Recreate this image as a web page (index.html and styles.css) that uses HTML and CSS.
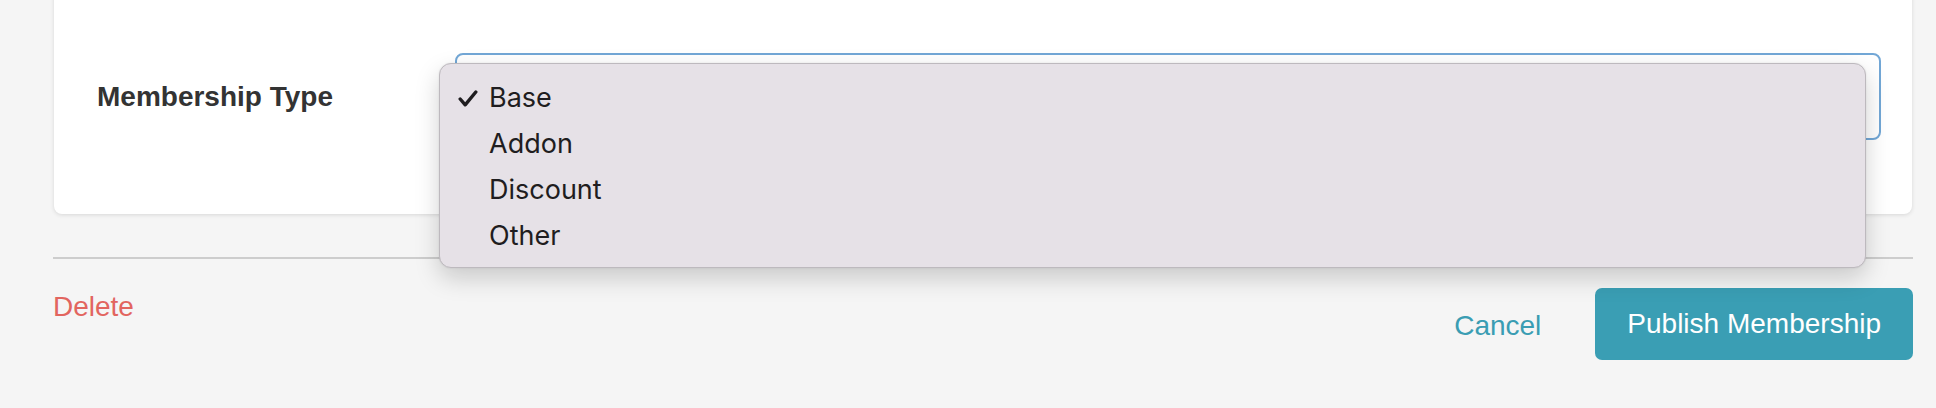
FILE: index.html
```html
<!DOCTYPE html>
<html lang="en">
<head>
    <meta charset="UTF-8">
    <title>Edit Membership</title>
    <link rel="stylesheet" href="styles.css">
</head>
<body>
    <div class="page">
        <!-- Form card -->
        <div class="card">
            <div class="form-row">
                <label class="field-label">Membership Type</label>
                <div class="select-wrap">
                    <div class="select-box"></div>

                    <!-- Open native menu -->
                    <ul class="menu">
                        <li class="menu-item selected">
                            <svg class="check" width="20" height="17" viewBox="0 0 20 17">
                                <path d="M2.2 9 L7.2 14.8 L17.8 2" fill="none" stroke="#1f1d20" stroke-width="3.4" stroke-linecap="round" stroke-linejoin="round"/>
                            </svg>
                            Base
                        </li>
                        <li class="menu-item">Addon</li>
                        <li class="menu-item">Discount</li>
                        <li class="menu-item">Other</li>
                    </ul>
                </div>
            </div>
        </div>

        <hr class="divider">

        <!-- Bottom actions -->
        <div class="actions">
            <a class="delete-link" href="#">Delete</a>
            <div class="right-actions">
                <a class="cancel-link" href="#">Cancel</a>
                <button class="publish-btn">Publish Membership</button>
            </div>
        </div>
    </div>
</body>
</html>
```
FILE: styles.css
```css
body {
    margin: 0;
    background-color: #f5f5f5;
    font-family: "Liberation Sans", Arial, sans-serif;
    color: #333;
    overflow: hidden;
}
.page {
    margin: 0 23px 0 53px;
}
/* Card */
.card {
    background-color: #fff;
    margin: -20px 1px 0 1px;
    padding: 73px 31px 74px 43px;
    border-radius: 8px;
    box-shadow: 0 1px 4px rgba(0, 0, 0, 0.12);
}
.form-row {
    display: grid;
    grid-template-columns: 358px 1fr;
    align-items: center;
}
.field-label {
    font-size: 28px;
    font-weight: bold;
    color: #333;
}
.select-wrap {
    position: relative;
}
.select-box {
    height: 87px;
    border: 2px solid #72a7d6;
    border-radius: 8px;
    box-sizing: border-box;
}
/* Dropdown menu */
.menu {
    position: absolute;
    top: 10px;
    left: -16px;
    width: 1427px;
    margin: 0;
    padding: 11px 0 8px 0;
    list-style: none;
    box-sizing: border-box;
    background-color: #e6e1e7;
    border: 1px solid #bdb9be;
    border-radius: 12px;
    box-shadow: 0 10px 24px rgba(0, 0, 0, 0.18), 0 0 2px rgba(0, 0, 0, 0.1);
    font-family: Inter, "Noto Sans", sans-serif;
    font-size: 27px;
    color: #1f1d20;
}
.menu-item {
    position: relative;
    height: 46px;
    line-height: 46px;
    padding-left: 49px;
}
.check {
    position: absolute;
    left: 18px;
    top: 15px;
}
/* Divider */
.divider {
    border: none;
    height: 2px;
    background-color: #cdcdcd;
    margin: 43px 0 0 0;
}
/* Bottom actions */
.actions {
    display: flex;
    justify-content: space-between;
    align-items: flex-start;
    padding-top: 29px;
}
.delete-link {
    font-size: 28px;
    line-height: 34px;
    margin-top: 2px;
    color: #e2655f;
    text-decoration: none;
}
.right-actions {
    display: flex;
    align-items: flex-start;
    gap: 54px;
}
.cancel-link {
    font-size: 28px;
    line-height: 34px;
    margin-top: 21px;
    color: #3a9db3;
    text-decoration: none;
}
.publish-btn {
    height: 72px;
    padding: 0 32px;
    border: none;
    border-radius: 7px;
    background-color: #3a9eb4;
    color: #fff;
    font-family: "Liberation Sans", Arial, sans-serif;
    font-size: 28px;
    line-height: 68px;
    cursor: pointer;
}
```
